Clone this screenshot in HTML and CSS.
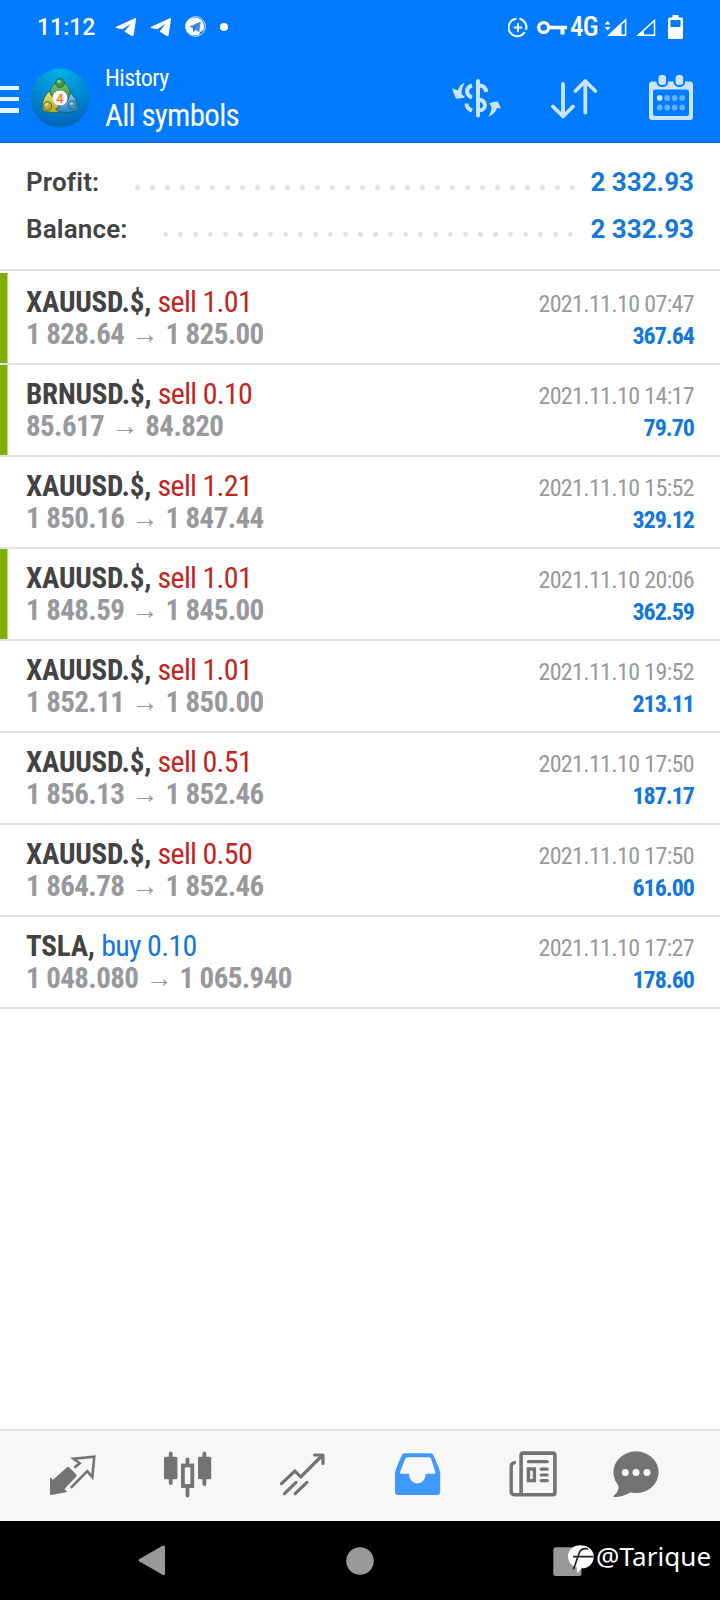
FILE: index.html
```
<!DOCTYPE html>
<html lang="en">
<head>
<meta charset="utf-8">
<title>History</title>
<link rel="stylesheet" href="styles.css">
</head>
<body>
<div class="screen">
  <header class="top">
    <div class="status">
      <span class="clock">11:12</span>
      <svg class="tg" width="22" height="22" viewBox="0 0 22 22"><path d="M.8 11 19.800 2.200q1.400-.5 1.200.8L18.700 19q-.4 1.600-1.900.9L9.500 15.400 15.500 8 7.300 13.200 .9 12q-.9-.4-.1-1Z" fill="#fff"/></svg>
      <svg class="tg" width="22" height="22" viewBox="0 0 22 22"><path d="M.8 11 19.800 2.200q1.400-.5 1.200.8L18.700 19q-.4 1.600-1.900.9L9.500 15.400 15.500 8 7.300 13.200 .9 12q-.9-.4-.1-1Z" fill="#fff"/></svg>
      <svg class="tg" width="22" height="22" viewBox="0 0 22 22"><circle cx="10.500" cy="10.500" r="9.900" fill="none" stroke="#cfe5ff" stroke-width="1"/><path d="M10.500 1.800a8.700 8.700 0 0 1 7.500 13l-3 1.200-1 3.200h-6A8.700 8.700 0 0 1 10.500 1.800Z" fill="#fff"/><path d="m4 10.700 11.800-5.200-1.500 10.700-3.600-2.100-2 2.200-.9-4.400Z" fill="#4a8fe8"/><path d="m7.800 11.900 6-4.700-4.600 6-.5 3Z" fill="#245fc4"/></svg>
      <i class="dot"></i>
      <div class="signals">
        <svg width="20" height="22" viewBox="508 15 20 22" fill="none" stroke="#fff" stroke-width="2"><path d="M516.500 17.800a8.700 8.700 0 1 0 8.200 13.200M519.500 17.800a8.700 8.700 0 0 1 6.500 11"/><path d="M518 22.300v8.400M513.800 26.500h8.400"/></svg>
        <svg class="key" width="30" height="22" viewBox="537 15 30 22"><circle cx="543.700" cy="26.500" r="4.900" fill="none" stroke="#fff" stroke-width="3.300"/><path d="M549 24.800h18v3.500h-2.500V33.500h-4V28.300H549Z" fill="#fff"/></svg>
        <span class="net">4G</span>
        <svg class="sig1" width="22" height="22" viewBox="605 15 22 22"><path d="M625.600 19v15.300h-16.400Z" fill="none" stroke="#fff" stroke-width="1.500"/><path d="M621.500 21.500v13.300H607.500Z" fill="#fff"/><path d="m607.600 20 3 3.600h-6Zm0 9.500 3-3.600h-6Z" fill="#fff"/></svg>
        <svg class="sig2" width="20" height="22" viewBox="636 15 20 22"><path d="M654.500 19.500v14.800h-16.300Z" fill="none" stroke="#fff" stroke-width="1.500"/><path d="m644 29v6h-7Z" fill="#fff"/></svg>
        <svg class="bat" width="15" height="26" viewBox="668 13 15 26"><path fill-rule="evenodd" d="M672.500 14h6v2.500h3q1.500 0 1.500 1.500v18.500q0 1.500-1.500 1.500h-12q-1.500 0-1.500-1.500V18q0-1.500 1.500-1.500h3ZM670.500 19v7h10v-7Z" fill="#fff"/></svg>
      </div>
    </div>
    <div class="appbar">
      <div class="burger"><i></i><i></i><i></i></div>
      <svg class="logo" width="60" height="60" viewBox="0 0 60 60">
        <defs>
          <radialGradient id="sea" cx=".5" cy="0" r="1"><stop offset="0" stop-color="#00b4e4"/><stop offset=".55" stop-color="#0089d4"/><stop offset="1" stop-color="#0064b9"/></radialGradient>
          <linearGradient id="grn" x2="0" y2="1"><stop stop-color="#83c96b"/><stop offset="1" stop-color="#2b8d47"/></linearGradient>
          <linearGradient id="yel" x2="0" y2="1"><stop stop-color="#efe577"/><stop offset="1" stop-color="#bca51c"/></linearGradient>
          <linearGradient id="blu" x2="0" y2="1"><stop stop-color="#8ed0f5"/><stop offset="1" stop-color="#2580cb"/></linearGradient>
        </defs>
        <circle cx="30" cy="30" r="29.500" fill="url(#sea)"/>
        <g stroke="#1b5a59" stroke-width=".8">
          <path d="M19.500 27Q20 15 30 14q10 1 10.500 13l-4 5H23.500Z" fill="url(#grn)"/>
          <path d="M19.500 23q-7 6-7.500 16 0 5 6 5 8 2 14-1L21 27Z" fill="url(#yel)"/>
          <path d="M40.500 25q7 7 8 14-1 5-8 5-9 2-15-3l12-8Z" fill="url(#blu)"/>
          <circle cx="30" cy="15" r="4.500" fill="#3d9a4b"/>
          <circle cx="17.500" cy="38" r="4.300" fill="#c1ae2e"/>
          <circle cx="42.500" cy="37" r="4.300" fill="#3f93d3"/>
        </g>
        <g fill="#fff" opacity=".45"><circle cx="29" cy="13.500" r="1.800"/><circle cx="16.500" cy="36.500" r="1.800"/><circle cx="41.500" cy="35.500" r="1.800"/></g>
        <circle cx="30" cy="30" r="7.600" fill="#fffdf8"/>
        <text class="four" x="30" y="34.500" text-anchor="middle">4</text>
      </svg>
      <div class="titles"><div class="sub">History</div><div class="main">All symbols</div></div>
      <svg class="act" width="50" height="46" viewBox="452 74 50 46" fill="none" stroke="#c8e4ff" stroke-linecap="round">
        <path d="M479.000 80v34.500" stroke-width="4"/>
        <g stroke-width="4" stroke-linecap="butt"><path d="M473 84.500c-6.500 2-6.500 9.500 0 12"/><path d="M467.500 102.500c0 4 2.500 6 5.500 7.200"/><path d="M480 84.500c4 0 6.500 2 7.500 6.500"/><path d="M480 98.500c8 1.500 8 10.500 0 11"/></g>
        <path d="M465.500 82c-3.500 1-6 4-6.500 7.500l-5.800-2.200c1 4 2.500 8 3.800 10.500 3-.2 6.500-.5 9-1.500l-3.500-3.500c0-3.500 1-7 3-10.800ZM489.500 115.500c4-1.500 7.500-4.500 8.500-8.800l4 1c-1-2.500-2-5-3.200-7.200-3 0-6 .8-8.800 2l2.500 3.500c0 3-1 6-3 9.500Z" fill="#c8e4ff" stroke="none"/>
      </svg>
      <svg class="act arrows" width="46" height="46" viewBox="551 74 46 46" fill="none" stroke="#c8e4ff" stroke-width="3.800" stroke-linecap="round" stroke-linejoin="round"><path d="M563 83v32M553 105.500l10 10 10-10M585.300 111.500V80.500M575.500 90l9.800-10 10 10"/></svg>
      <svg class="act cal" width="44" height="46" viewBox="649 74 44 46">
        <path fill-rule="evenodd" d="M652 80.500h38q3 0 3 3v32.500q0 3-3 3h-38q-3 0-3-3V83.500q0-3 3-3ZM655.500 88.500q-2.500 0-2.500 2.500v21.500q0 2.500 2.500 2.500h31q2.500 0 2.500-2.500V91q0-2.500-2.500-2.500Z" fill="#c8e4ff"/>
        <g fill="#c8e4ff" stroke="#007aff" stroke-width="2"><rect x="657.500" y="73" width="9.600" height="12" rx="4"/><rect x="674.600" y="73" width="9.600" height="12" rx="4"/></g>
        <g fill="#64b0ff"><circle cx="667.200" cy="97" r="2.900"/><circle cx="674.700" cy="97" r="2.900"/><circle cx="682.200" cy="97" r="2.900"/><circle cx="659.700" cy="106.500" r="2.900"/><circle cx="667.200" cy="106.500" r="2.900"/><circle cx="674.700" cy="106.500" r="2.900"/><circle cx="682.200" cy="106.500" r="2.900"/></g>
        <circle cx="659.700" cy="97" r="2.900" fill="#c8e4ff"/>
      </svg>
    </div>
  </header>

  <section class="summary">
    <div class="total"><span>Profit:</span><i class="leader profit"></i><b>2 332.93</b></div>
    <div class="total"><span>Balance:</span><i class="leader balance"></i><b>2 332.93</b></div>
  </section>

  <main class="deals">
    <div class="deal first tp"><div class="left"><p class="sym">XAUUSD.$, <span class="sell">sell 1.01</span></p><p class="px">1 828.64 <i>→</i> 1 825.00</p></div><div class="right"><p class="date">2021.11.10 07:47</p><p class="val">367.64</p></div></div>
    <div class="deal tp"><div class="left"><p class="sym">BRNUSD.$, <span class="sell">sell 0.10</span></p><p class="px">85.617 <i>→</i> 84.820</p></div><div class="right"><p class="date">2021.11.10 14:17</p><p class="val">79.70</p></div></div>
    <div class="deal"><div class="left"><p class="sym">XAUUSD.$, <span class="sell">sell 1.21</span></p><p class="px">1 850.16 <i>→</i> 1 847.44</p></div><div class="right"><p class="date">2021.11.10 15:52</p><p class="val">329.12</p></div></div>
    <div class="deal tp"><div class="left"><p class="sym">XAUUSD.$, <span class="sell">sell 1.01</span></p><p class="px">1 848.59 <i>→</i> 1 845.00</p></div><div class="right"><p class="date">2021.11.10 20:06</p><p class="val">362.59</p></div></div>
    <div class="deal"><div class="left"><p class="sym">XAUUSD.$, <span class="sell">sell 1.01</span></p><p class="px">1 852.11 <i>→</i> 1 850.00</p></div><div class="right"><p class="date">2021.11.10 19:52</p><p class="val">213.11</p></div></div>
    <div class="deal"><div class="left"><p class="sym">XAUUSD.$, <span class="sell">sell 0.51</span></p><p class="px">1 856.13 <i>→</i> 1 852.46</p></div><div class="right"><p class="date">2021.11.10 17:50</p><p class="val">187.17</p></div></div>
    <div class="deal"><div class="left"><p class="sym">XAUUSD.$, <span class="sell">sell 0.50</span></p><p class="px">1 864.78 <i>→</i> 1 852.46</p></div><div class="right"><p class="date">2021.11.10 17:50</p><p class="val">616.00</p></div></div>
    <div class="deal"><div class="left"><p class="sym">TSLA, <span class="buy">buy 0.10</span></p><p class="px">1 048.080 <i>→</i> 1 065.940</p></div><div class="right"><p class="date">2021.11.10 17:27</p><p class="val">178.60</p></div></div>
  </main>

  <nav class="tabs">
    <svg width="115" height="90" viewBox="15 1431 115 90"><path d="M50 1477.300l3 2.500 14-12.600q1-1 2 0l7.300 7.300q1 1 0 2L64.500 1489l2.800 3-16 3q-1.300.2-1.300-1.200Z" fill="#737373"/><path d="M74.300 1467.700l5.400-4.400-6.200-4.500 20.800-2.200-2 20.500-5-6-16.500 16.700" fill="none" stroke="#737373" stroke-width="2.600"/></svg>
    <svg width="115" height="90" viewBox="130 1431 115 90"><g fill="#737373"><rect x="164" y="1456.700" width="13.400" height="22.500" rx="1.500"/><rect x="198" y="1456.700" width="13.200" height="22.600" rx="1.500"/></g><g fill="none" stroke="#737373" stroke-width="3.800" stroke-linecap="round"><path d="M170.700 1453.500v29.500M204.400 1453.500v30.500M187.500 1459.500v5M187.500 1488v7.500"/><rect x="182.900" y="1465.500" width="9.400" height="20.500"/></g></svg>
    <svg width="115" height="90" viewBox="245 1431 115 90" fill="none" stroke="#737373" stroke-width="3.200" stroke-linecap="round" stroke-linejoin="round"><path d="M281.500 1483.700l13.500-12.700 5.700 6 21.500-21.500M314.500 1455h8.500v8.500M284.500 1493.700l11.500-11.300M295.200 1493.700l11.800-11.300"/></svg>
    <svg width="115" height="90" viewBox="360 1431 115 90"><path fill-rule="evenodd" d="M404.500 1453.200h26q2 0 3 2l5.500 13q1.200 3 1.200 6v17.800q0 3-3 3h-39.200q-3 0-3-3v-17.800q0-3 1.200-6l5.500-13q1-2 2.800-2ZM407.500 1457.200q-1.500 0-2.200 1.500l-5 12.500q-.8 2.600.7 2.600h8c.2 12.800 16.500 12.800 16.700 0h8.200q2.200 0 1.200-2.600l-4-12.500q-.6-1.500-2-1.500Z" fill="#4099ff"/></svg>
    <svg width="115" height="90" viewBox="475 1431 115 90" fill="none" stroke="#737373" stroke-linecap="round"><rect x="521.100" y="1453.100" width="33.800" height="41.600" rx="2" stroke-width="3.600"/><path d="M514.500 1462.600q-3.300.6-3.300 4v25q0 3.100 3.100 3.100h7" stroke-width="3.400"/><path d="M528.400 1461.700h18.800M541.200 1469.200h6M541.200 1475h6M541.200 1480.600h6" stroke-width="3.200"/><rect x="528.400" y="1468.900" width="6" height="11.700" stroke-width="3.400"/></svg>
    <svg width="94" height="90" viewBox="590 1431 94 90"><ellipse cx="636" cy="1472.200" rx="22.600" ry="20.900" fill="#737373"/><path d="M618 1483q2 8-4 12.500-1.500 1.400.5 1.400 9 0 16.500-5Z" fill="#737373"/><g fill="#f7f7f7"><circle cx="625.300" cy="1472.500" r="3.500"/><circle cx="636" cy="1472.500" r="3.500"/><circle cx="647" cy="1472.500" r="3.500"/></g></svg>
  </nav>

  <footer class="sysnav">
    <svg width="28" height="31" viewBox="138 1545 28 31"><path d="M139.500 1561.500q-2-1.200 0-2.400l23-13.300q2.500-1.200 2.500 1.500v26q0 2.700-2.500 1.500Z" fill="#999"/></svg>
    <svg class="home" width="28" height="28" viewBox="0 0 28 28"><circle cx="14" cy="14" r="13.800" fill="#999"/></svg>
    <svg class="recent" width="41" height="34" viewBox="553 1543 41 34"><rect x="553.300" y="1546.300" width="28.200" height="28.700" rx="2.500" fill="#999"/><path d="M582 1544.500a11.700 11.300 0 0 1 0 22.800q-1 0-4 4.300-1.500.5-1-5a11.500 11.300 0 0 1 5-22.100Z" fill="#fff"/><path d="M588 1548q-7-1.500-9 4.500l-5.500 16M573 1555.700h20.500" fill="none" stroke="#222" stroke-width="1.700"/></svg>
    <span class="mark">@Tarique</span>
  </footer>
</div>
</body>
</html>
```
FILE: styles.css
```
* { box-sizing: border-box; }
body { margin: 0; background: #fff; font-family: Roboto, "Liberation Sans", sans-serif; }
p { margin: 0; }
.screen { width: 720px; height: 1600px; display: flex; flex-direction: column; overflow: hidden; }
svg { display: block; flex: none; }

.top { height: 143px; background: #007aff; color: #fff; border-bottom: 1px solid #0b6cd0; }
.status { height: 53px; display: flex; align-items: center; padding: 0 37px; }
.clock { width: 78px; font-size: 23px; font-weight: 500; line-height: 28px; padding-top: 2px; }
.tg { margin-right: 13px; }
.dot { width: 8px; height: 8px; border-radius: 50%; background: #fff; }
.signals { margin-left: auto; display: flex; align-items: center; }
.key { margin-left: 9px; }
.net { width: 38px; padding: 1px 0 0 3px; font: 500 27px/30px "Roboto Condensed", Roboto, sans-serif; letter-spacing: -0.7px; }
.sig2 { margin-left: 9px; }
.bat { margin-left: 12px; }

.appbar { height: 89px; display: flex; align-items: center; }
.burger { width: 19px; height: 27px; display: flex; flex-direction: column; justify-content: space-between; margin-top: 3px; }
.burger i { height: 4.500px; background: #e8f4ff; }
.logo { margin: 1px 0 0 11px; }
.titles { width: 361px; padding-left: 15px; font-family: "Roboto Condensed", Roboto, sans-serif; }
.sub { font-size: 24px; line-height: 34px; margin-top: 1px; letter-spacing: -0.6px; }
.main { font-size: 31px; line-height: 41px; letter-spacing: -0.7px; }
.arrows { margin-left: 50px; }
.cal { margin-left: 52px; }
.four { font: 13px Roboto, sans-serif; fill: #f08030; stroke: #f08030; stroke-width: 0.4px; }

.summary { height: 126px; padding: 16px 26px 0; }
.total { height: 47px; display: flex; align-items: center; font-size: 26px; line-height: 47px; color: #434343; }
.total span { font-weight: 600; letter-spacing: 0.15px; }
.total b { width: 106px; text-align: right; color: #1477dc; font-weight: 700; white-space: nowrap; }
.leader { margin-left: auto; margin-right: 13px; height: 5px; margin-top: 10px; background: radial-gradient(circle at 2.500px 2.500px, #e4e4e4 2.200px, transparent 2.800px) 0 0 / 15px 5px repeat-x; }
.leader.profit { width: 440px; }
.leader.balance { width: 410px; margin-right: 15px; }

.deals { border-top: 2px solid #e2e2e2; }
.deal { height: 92px; border-bottom: 2px solid #e2e2e2; display: flex; justify-content: space-between; padding: 13px 26px 0; font-family: "Roboto Condensed", Roboto, sans-serif; }
.deal.first { border-top: 2px solid #fff; height: 94px; }
.deal.tp { background: linear-gradient(#7fb000, #7fb000) 0 0 / 7.500px 100% no-repeat; }
.deal p { height: 32px; line-height: 32px; white-space: nowrap; }
.sym { font-size: 29px; font-weight: 700; color: #434343; letter-spacing: -0.2px; }
.sym span { font-size: 30px; font-weight: 400; letter-spacing: -0.7px; }
.sell { color: #c22522; }
.buy { color: #1477dc; }
.px { font-size: 29px; font-weight: 700; color: #98999c; letter-spacing: -0.6px; }
.px i { display: inline-block; width: 20px; font: 500 27px/20px Roboto, sans-serif; margin: 0 4px 0 5px; letter-spacing: 0; text-indent: -4px; vertical-align: 1px; }
.right { text-align: right; padding-top: 2px; }
.date { font-size: 24px; color: #999; letter-spacing: -0.65px; }
.val { font-size: 24px; font-weight: 700; color: #1477dc; letter-spacing: -1px; }

.tabs { height: 92px; margin-top: auto; background: #f7f7f7; border-top: 2px solid #e2e2e2; display: flex; padding-left: 15px; }
.sysnav { height: 79px; background: #000; display: flex; align-items: center; padding-left: 138px; }
.home { margin-left: 180px; }
.recent { margin-left: 179px; }
.mark { margin-left: 2px; color: #fff; font: 26px/34px "Noto Sans", sans-serif; margin-top: -10px; letter-spacing: 0.1px; }
```
